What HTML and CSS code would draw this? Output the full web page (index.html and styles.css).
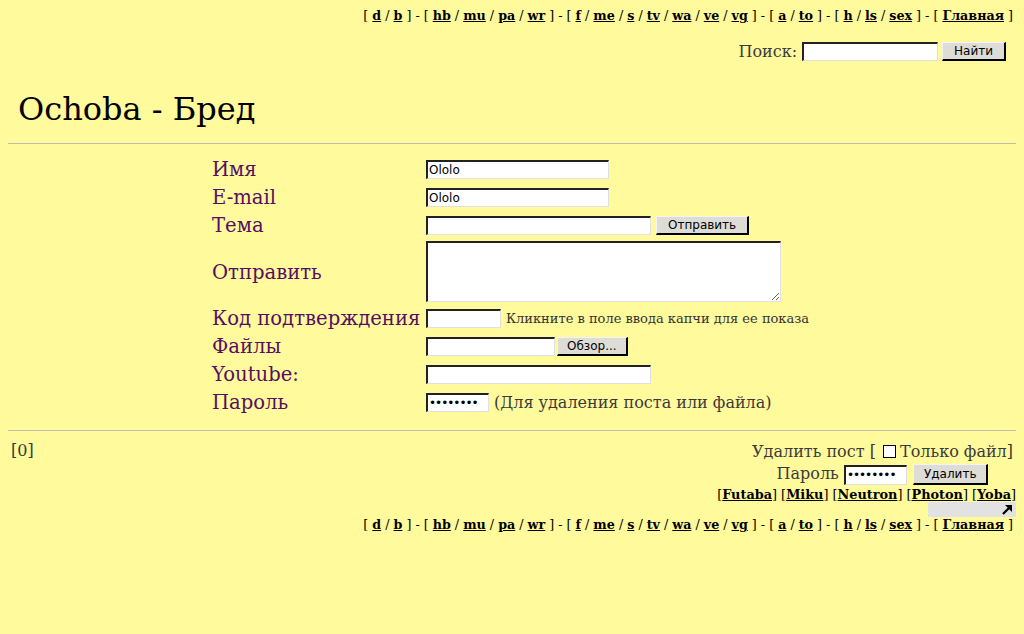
FILE: index.html
```html
<!DOCTYPE html>
<html lang="ru">
<head>
  <meta charset="UTF-8">
  <title>Ochoba - Бред</title>
  <link rel="stylesheet" href="styles.css">
</head>
<body>

  <div class="adminbar">
    [ <a href="#">d</a> / <a href="#">b</a> ] - [ <a href="#">hb</a> / <a href="#">mu</a> / <a href="#">pa</a> / <a href="#">wr</a> ] - [ <a href="#">f</a> / <a href="#">me</a> / <a href="#">s</a> / <a href="#">tv</a> / <a href="#">wa</a> / <a href="#">ve</a> / <a href="#">vg</a> ] - [ <a href="#">a</a> / <a href="#">to</a> ] - [ <a href="#">h</a> / <a href="#">ls</a> / <a href="#">sex</a> ] - [ <a href="#">Главная</a> ]
  </div>

  <form class="search">
    <span class="note">Поиск:</span>
    <input type="text" class="field w-search">
    <button type="button" class="btn">Найти</button>
  </form>

  <h1 class="logo">Ochoba - Бред</h1>
  <hr>

  <div class="postarea">
    <form class="postform">
      <div class="label">Имя</div>
      <div class="cell"><input type="text" class="field w-name" value="Ololo"></div>

      <div class="label">E-mail</div>
      <div class="cell"><input type="text" class="field w-name" value="Ololo"></div>

      <div class="label">Тема</div>
      <div class="cell">
        <input type="text" class="field w-long">
        <button type="button" class="btn">Отправить</button>
      </div>

      <div class="label">Отправить</div>
      <div class="cell"><textarea class="field comment"></textarea></div>

      <div class="label">Код подтверждения</div>
      <div class="cell">
        <input type="text" class="field w-captcha">
        <span class="hint">Кликните в поле ввода капчи для ее показа</span>
      </div>

      <div class="label">Файлы</div>
      <div class="cell">
        <input type="text" class="field w-file"><button type="button" class="btn browse">Обзор...</button>
      </div>

      <div class="label">Youtube:</div>
      <div class="cell"><input type="text" class="field w-long"></div>

      <div class="label">Пароль</div>
      <div class="cell">
        <input type="password" class="field w-pass" value="12345678">
        <span class="note">(Для удаления поста или файла)</span>
      </div>
    </form>
  </div>

  <hr>

  <div class="bottom">
    <div class="note pages">[0]</div>
    <div class="userdelete note">
      <div>Удалить пост [ <span class="checkbox"></span>Только файл]</div>
      <div class="delrow">
        Пароль <input type="password" class="field w-pass" value="12345678">
        <button type="button" class="btn delbtn">Удалить</button>
      </div>
    </div>
  </div>

  <div class="stylechanger">
    [<a href="#">Futaba</a>] [<a href="#">Miku</a>] [<a href="#">Neutron</a>] [<a href="#">Photon</a>] [<a href="#">Yoba</a>]
  </div>

  <div class="expand">
    <svg width="11" height="11" viewBox="0 0 11 11">
      <path d="M1 10 L9 2" stroke="#000" stroke-width="2.2"/>
      <path d="M3 1 H10 V8 Z" fill="#000"/>
    </svg>
  </div>

  <div class="adminbar">
    [ <a href="#">d</a> / <a href="#">b</a> ] - [ <a href="#">hb</a> / <a href="#">mu</a> / <a href="#">pa</a> / <a href="#">wr</a> ] - [ <a href="#">f</a> / <a href="#">me</a> / <a href="#">s</a> / <a href="#">tv</a> / <a href="#">wa</a> / <a href="#">ve</a> / <a href="#">vg</a> ] - [ <a href="#">a</a> / <a href="#">to</a> ] - [ <a href="#">h</a> / <a href="#">ls</a> / <a href="#">sex</a> ] - [ <a href="#">Главная</a> ]
  </div>

</body>
</html>
```

FILE: styles.css
```css
* { box-sizing: border-box; }
body {
  margin: 8px;
  background: #fffa9c;
  color: #333;
  font-family: "DejaVu Serif", serif;
  font-size: 16px;
}
a {
  color: #000;
  font-weight: bold;
}
hr {
  border: none;
  border-top: 1px solid #c0bcae;
  margin: 0;
}
.adminbar {
  text-align: right;
  font-size: 12.7px;
  line-height: 15px;
  color: #000;
  padding-right: 3px;
}
.search {
  display: flex;
  justify-content: flex-end;
  align-items: center;
  gap: 4px;
  margin: 19px 10px 0 0;
}
.search .note {
  margin-right: 1px;
}
.note {
  color: #3a3a3a;
  font-size: 16px;
}
.field {
  height: 19px;
  border-style: solid;
  border-width: 2px 1px 1px 2px;
  border-color: #222 #e0e0e0 #e0e0e0 #222;
  background: #fff;
  font-family: "DejaVu Sans", sans-serif;
  font-size: 12px;
  padding: 0 1px;
  margin: 0;
  vertical-align: middle;
}
.btn {
  height: 19px;
  background: #dedcd6;
  border-style: solid;
  border-width: 1px 2px 2px 1px;
  border-color: #f4f4f4 #000 #000 #f4f4f4;
  font-family: "DejaVu Sans", sans-serif;
  font-size: 12px;
  color: #000;
  padding: 0 11px;
  vertical-align: middle;
}
.w-search { width: 136px; }
.w-name { width: 183px; }
.w-long { width: 225px; }
.w-captcha { width: 75px; }
.w-file { width: 129px; }
.w-pass { width: 63px; letter-spacing: -1px; }
.logo {
  margin: 0;
  padding: 28px 0 14px 10px;
  font-size: 32px;
  font-weight: normal;
  color: #000;
  line-height: 40px;
}
.postarea {
  display: flex;
  justify-content: center;
  padding: 11px 0 14px 0;
}
.postform {
  display: grid;
  grid-template-columns: 214px auto;
  width: 600px;
}
.label {
  color: #560f62;
  font-size: 19.6px;
  line-height: 24px;
  padding: 3px 0 1px 0;
  display: flex;
  align-items: center;
  white-space: nowrap;
}
.cell {
  display: flex;
  align-items: center;
  gap: 5px;
  padding: 2px 0;
}
.comment {
  width: 355px;
  height: 61px;
}
.hint {
  font-size: 13px;
  color: #333;
}
.browse {
  margin-left: -3px;
  padding: 0 9px;
}
.bottom {
  display: flex;
  justify-content: space-between;
  padding-top: 10px;
}
.pages {
  padding-left: 3px;
}
.userdelete {
  text-align: center;
  padding-right: 3px;
  line-height: 22px;
}
.checkbox {
  display: inline-block;
  width: 13px;
  height: 13px;
  border: 1px solid #000;
  background: #fff;
  vertical-align: -1px;
  margin: 0 4px 0 2px;
}
.delrow .field {
  height: 20px;
}
.delbtn {
  margin-left: 1px;
  padding: 0 10px;
  height: 21px;
}
.stylechanger {
  text-align: right;
  font-size: 12.85px;
  line-height: 15px;
  color: #000;
  margin-top: 2px;
}
.expand {
  display: flex;
  justify-content: flex-end;
  align-items: center;
  margin-left: auto;
  width: 88px;
  height: 15px;
  background: #e2e2e2;
  padding-right: 3px;
}
```
